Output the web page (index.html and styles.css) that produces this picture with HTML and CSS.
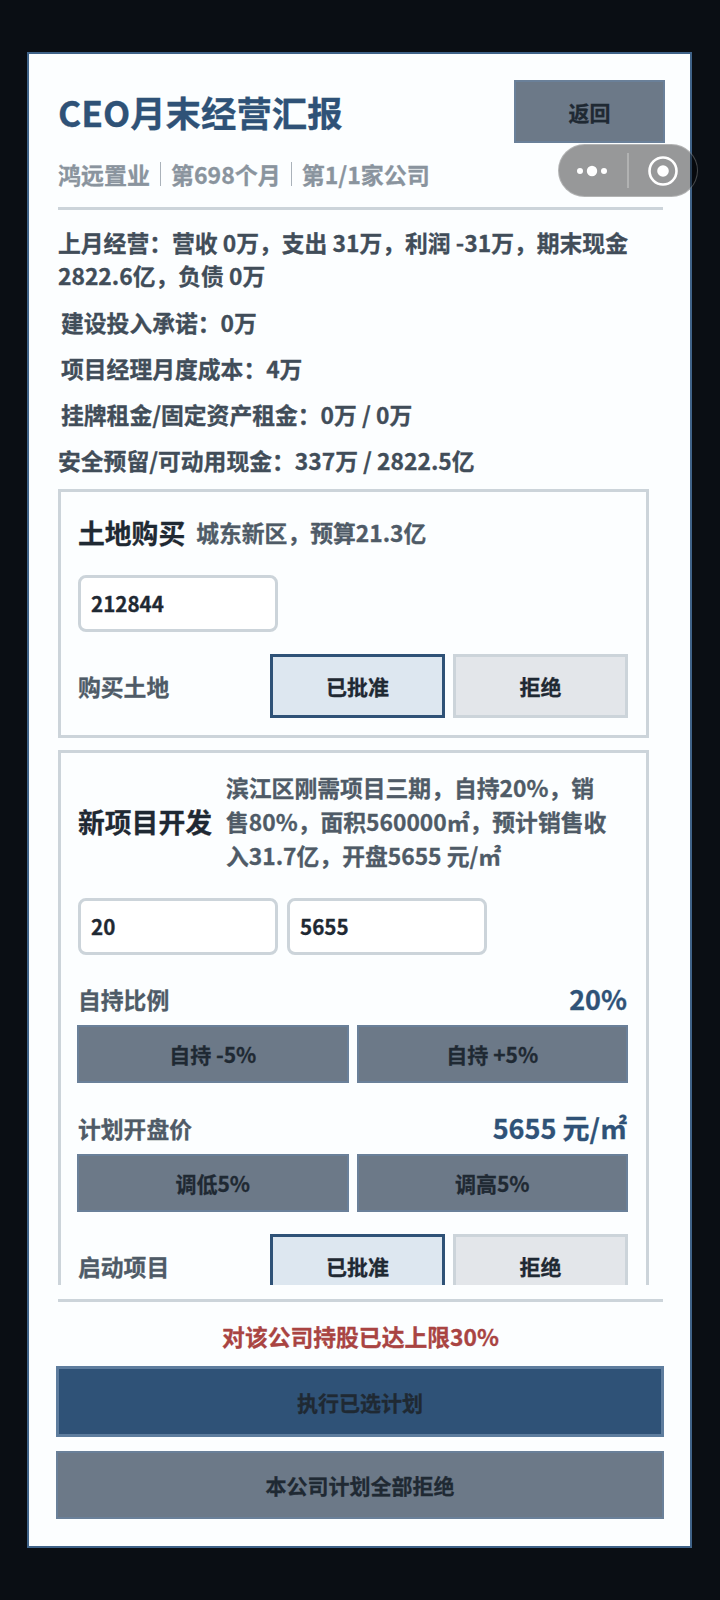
FILE: index.html
```html
<!DOCTYPE html>
<html lang="zh-CN">
<head>
<meta charset="utf-8">
<title>CEO月末经营汇报</title>
<link rel="stylesheet" href="styles.css">
</head>
<body>
<main class="card">
  <header class="head">
    <div class="head-top">
      <h1 class="title">CEO月末经营汇报</h1>
      <div class="btn btn-grey back">返回</div>
    </div>
    <div class="sub"><span>鸿远置业</span><i class="sep"></i><span>第698个月</span><i class="sep"></i><span>第1/1家公司</span></div>
  </header>
  <div class="scroll">
    <p class="stat stat-first">上月经营：营收 0万，支出 31万，利润 -31万，期末现金 2822.6亿，负债 0万</p>
    <p class="stat stat-in">建设投入承诺：0万</p>
    <p class="stat stat-in">项目经理月度成本：4万</p>
    <p class="stat stat-in">挂牌租金/固定资产租金：0万 / 0万</p>
    <p class="stat">安全预留/可动用现金：337万 / 2822.5亿</p>

    <section class="plan plan-land">
      <div class="plan-head">
        <h2 class="plan-name">土地购买</h2>
        <p class="plan-desc">城东新区，预算21.3亿</p>
      </div>
      <div class="inputs"><div class="input">212844</div></div>
      <div class="decide">
        <span class="label">购买土地</span>
        <div class="choice"><div class="btn btn-on">已批准</div><div class="btn btn-off">拒绝</div></div>
      </div>
    </section>

    <section class="plan plan-dev">
      <div class="plan-head plan-head-mid">
        <h2 class="plan-name">新项目开发</h2>
        <p class="plan-desc">滨江区刚需项目三期，自持20%，销售80%，面积560000㎡，预计销售收入31.7亿，开盘5655 元/㎡</p>
      </div>
      <div class="inputs"><div class="input">20</div><div class="input">5655</div></div>
      <div class="adjust adjust-first">
        <div class="adjust-top"><span class="label">自持比例</span><span class="val">20%</span></div>
        <div class="pair"><div class="btn btn-grey">自持 -5%</div><div class="btn btn-grey">自持 +5%</div></div>
      </div>
      <div class="adjust">
        <div class="adjust-top"><span class="label">计划开盘价</span><span class="val">5655 元/㎡</span></div>
        <div class="pair"><div class="btn btn-grey">调低5%</div><div class="btn btn-grey">调高5%</div></div>
      </div>
      <div class="decide decide-dev">
        <span class="label">启动项目</span>
        <div class="choice"><div class="btn btn-on">已批准</div><div class="btn btn-off">拒绝</div></div>
      </div>
    </section>
  </div>
  <footer class="foot">
    <p class="warn">对该公司持股已达上限30%</p>
    <div class="btn btn-main">执行已选计划</div>
    <div class="btn btn-grey btn-wide">本公司计划全部拒绝</div>
  </footer>
</main>
<div class="capsule">
  <svg class="cap-dots" width="34" height="14" viewBox="0 0 34 14"><circle cx="5" cy="7" r="3"/><circle cx="17" cy="7" r="5.2"/><circle cx="29" cy="7" r="3"/></svg>
  <i class="cap-sep"></i>
  <svg class="cap-target" width="32" height="32" viewBox="0 0 32 32"><circle cx="16" cy="16" r="13.5" fill="none" stroke="#fff" stroke-width="2.6"/><circle cx="16" cy="16" r="5.8" fill="#fff"/></svg>
</div>
</body>
</html>
```
FILE: styles.css
```css
* { box-sizing: border-box; }
html, body { margin: 0; padding: 0; }
body {
  width: 720px;
  height: 1600px;
  background: #0a0e14;
  padding: 52px 28px 52px 27px;
  font-family: "Noto Sans CJK SC", "Noto Sans", sans-serif;
  font-weight: 700;
  color: #1f2933;
  overflow: hidden;
  -webkit-text-stroke: 0.3px;
}
h1, h2, p { margin: 0; }
.card {
  height: 1496px;
  background: #fcfeff;
  border: 2px solid #3f6288;
  padding: 0 27px 0 29px;
  display: flex;
  flex-direction: column;
}
.head { flex: none; padding-top: 26px; }
.head-top { display: flex; justify-content: space-between; align-items: center; height: 63px; }
.title { font-size: 35.4px; line-height: 63px; color: #2f5277; font-weight: 700; }
.back { width: 151px; height: 63px; margin-right: -2px; }
.sub {
  display: flex;
  align-items: center;
  height: 33px;
  margin-top: 14px;
  font-size: 23px;
  color: #8a949e;
  font-weight: 700;
}
.sep { width: 1px; height: 24px; background: #aab2ba; margin: 0 10px; }
.scroll {
  flex: none;
  height: 1078px;
  margin-top: 17px;
  border-top: 3px solid #ccd4da;
  overflow: hidden;
  padding: 16px 14px 0 0;
}
.stat { font-size: 22.8px; line-height: 33px; color: #414d59; margin-bottom: 13px; }
.stat-first { margin-bottom: 14px; }
.stat-in { padding-left: 3px; }
.plan { background: #fcfeff; border: 3px solid #ccd4da; padding: 0 18px 0 17px; }
.plan-land { height: 249px; padding-top: 22px; margin-top: -1px; }
.plan-dev { margin-top: 12px; padding-top: 18px; }
.plan-head { display: flex; align-items: center; gap: 11px; }
.plan-head-mid { gap: 14px; }
.plan-name { font-size: 26.8px; line-height: 38px; color: #1f2933; white-space: nowrap; font-weight: 700; flex: none; }
.plan-desc { font-size: 22.8px; line-height: 34px; color: #4f5b67; max-width: 386px; }
.inputs { display: flex; gap: 9px; margin-top: 23px; }
.input {
  width: 200px;
  height: 57px;
  background: #fff;
  border: 3px solid #ccd4da;
  border-radius: 8px;
  padding-left: 10px;
  font-size: 20.6px;
  line-height: 51px;
  color: #1f2933;
}
.plan-dev .inputs { margin-top: 25px; }
.decide { display: flex; justify-content: space-between; align-items: center; margin-top: 22px; }
.decide-dev { margin-top: 22px; }
.label { font-size: 22.8px; color: #4f5b67; }
.choice { display: flex; gap: 8px; }
.choice .btn { width: 175px; height: 64px; }
.btn {
  display: flex;
  align-items: center;
  justify-content: center;
  font-size: 21px;
  font-weight: 700;
  color: #1f2933;
}
.btn-grey { background: #6c7988; border: 2px solid #6a8099; }
.btn-on { background: #dde7f0; border: 3px solid #2f5277; }
.btn-off { background: #e3e6ea; border: 3px solid #ccd4da; }
.adjust { margin-top: 25px; }
.adjust-first { margin-top: 24px; }
.adjust-top { display: flex; justify-content: space-between; align-items: center; height: 40px; }
.val { font-size: 27px; line-height: 40px; color: #2f5277; margin-right: 1px; }
.pair { display: flex; gap: 8px; margin-top: 6px; margin-left: -1px; }
.pair .btn { flex: 1; height: 58px; }
.foot { flex: none; border-top: 3px solid #ccd4da; margin-top: 14px; }
.warn { font-size: 22.8px; line-height: 33px; color: #a94442; text-align: center; margin-top: 18px; }
.btn-main { background: #2f5277; border: 3px solid #5e7d9e; height: 71px; margin: 13px -1px 0 -2px; }
.btn-wide { height: 68px; margin: 14px -1px 0 -2px; }
.capsule {
  position: absolute;
  left: 558px;
  top: 144px;
  width: 140px;
  height: 53px;
  border-radius: 27px;
  background: rgba(0, 0, 0, 0.4);
  border: 1px solid rgba(255, 255, 255, 0.25);
  display: flex;
  align-items: center;
}
.cap-dots { fill: #fff; margin-left: 16px; }
.cap-sep { width: 2px; height: 35px; background: rgba(255, 255, 255, 0.25); margin: 0 18px; }
```
